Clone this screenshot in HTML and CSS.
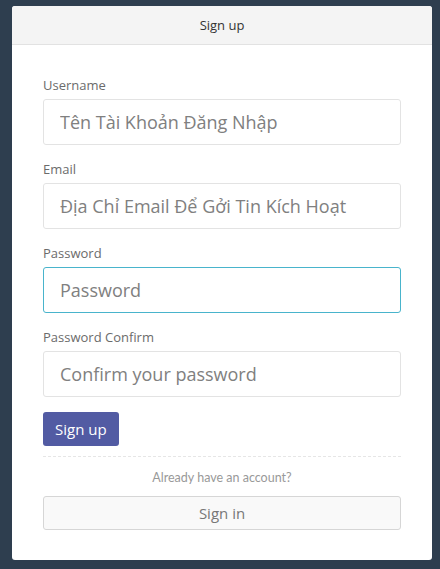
FILE: index.html
```html
<!DOCTYPE html>
<html lang="vi">
<head>
<meta charset="utf-8">
<title>Sign up</title>
<link rel="stylesheet" href="styles.css">
</head>
<body>
<div class="card">
  <div class="card-header">Sign up</div>
  <form class="card-body">
    <div class="field">
      <label class="label" for="u">Username</label>
      <input class="input" id="u" type="text" placeholder="Tên Tài Khoản Đăng Nhập">
    </div>
    <div class="field">
      <label class="label" for="e">Email</label>
      <input class="input" id="e" type="text" placeholder="Địa Chỉ Email Để Gởi Tin Kích Hoạt">
    </div>
    <div class="field">
      <label class="label" for="p">Password</label>
      <input class="input" id="p" type="password" placeholder="Password" autofocus>
    </div>
    <div class="field">
      <label class="label" for="c">Password Confirm</label>
      <input class="input" id="c" type="password" placeholder="Confirm your password">
    </div>
    <button class="btn-primary" type="button">Sign up</button>
    <div class="divider"></div>
    <p class="note">Already have an account?</p>
    <button class="btn-default" type="button">Sign in</button>
  </form>
</div>
</body>
</html>
```
FILE: styles.css
```css
html, body {
  margin: 0;
  height: 100%;
}
body {
  background: #2e3e4f;
  padding: 6px 8px 0 12px;
  box-sizing: border-box;
  font-family: "Open Sans", "Noto Sans", sans-serif;
}
.card {
  width: 420px;
  background: #fff;
  border-radius: 3px;
  overflow: hidden;
}
.card-header {
  height: 38px;
  line-height: 38px;
  background: #f4f4f4;
  border-bottom: 1px solid #e2e2e2;
  text-align: center;
  font-size: 13px;
  color: #333;
}
.card-body {
  margin: 0;
  padding: 31px 31px 30px;
  display: flex;
  flex-direction: column;
}
.field {
  display: flex;
  flex-direction: column;
  margin-bottom: 15px;
}
.label {
  font-size: 13px;
  line-height: 18px;
  color: #6b6b6b;
  font-weight: 500;
  margin-bottom: 5px;
}
.input {
  box-sizing: border-box;
  height: 46px;
  width: 100%;
  border: 1px solid #e3e3e3;
  border-radius: 3px;
  padding: 0 16px;
  font-family: "Open Sans", "Noto Sans", sans-serif;
  font-size: 18px;
  color: #666;
  background: #fff;
}
.input::placeholder {
  color: #808080;
}
.input:focus {
  outline: none;
  border-color: #49b4cc;
}
.btn-primary {
  align-self: flex-start;
  height: 34px;
  padding: 0 12px;
  border: none;
  border-radius: 3px;
  background: #525ba3;
  color: #fff;
  font-family: "Open Sans", "Noto Sans", sans-serif;
  font-size: 15px;
}
.divider {
  border-top: 1px dashed #e6e6e6;
  margin-top: 10px;
}
.note {
  margin: 13px 0 10px;
  text-align: center;
  font-family: Lato, sans-serif;
  font-size: 12.5px;
  line-height: 16px;
  color: #999;
}
.btn-default {
  height: 34px;
  width: 100%;
  border: 1px solid #d6d6d6;
  border-radius: 3px;
  background: #f9f9f9;
  color: #777;
  font-family: "Open Sans", "Noto Sans", sans-serif;
  font-size: 15px;
}
```
